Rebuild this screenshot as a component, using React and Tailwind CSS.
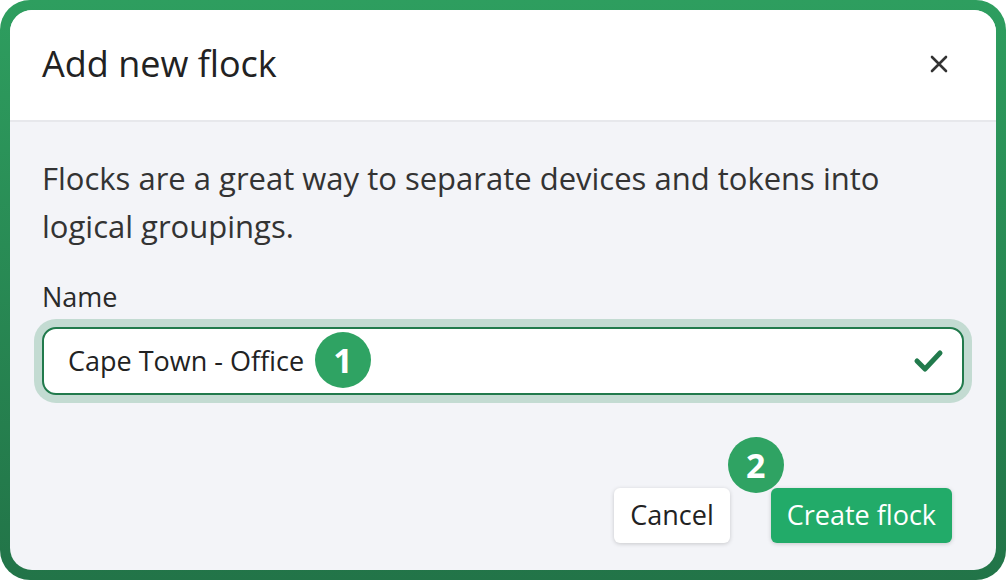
import React from "react";

function Badge({ n, className = "" }) {
  return (
    <div
      className={`absolute flex h-[56px] w-[56px] items-center justify-center rounded-full bg-[#2fa363] text-[34px] font-bold text-white ${className}`}
    >
      {n}
    </div>
  );
}

export default function App() {
  return (
    <div className="h-[580px] w-[1006px] bg-white" style={{ fontFamily: "'Open Sans', Lato, sans-serif" }}>
      <div className="h-full w-full rounded-[30px] bg-gradient-to-b from-[#2e9e5f] to-[#227448] p-[10px]">
        <div className="flex h-full flex-col overflow-hidden rounded-[22px] bg-[#f3f4f8]">
          {/* Header */}
          <div className="flex h-[112px] shrink-0 items-center justify-between border-b-2 border-[#e7e8ec] bg-white pb-[2px] pl-[32px] pr-[48px]">
            <h2 className="text-[36px] leading-none text-[#222]">Add new flock</h2>
            <svg width="18" height="18" viewBox="0 0 18 18" className="text-[#333]">
              <path d="M2 2L16 16M16 2L2 16" stroke="currentColor" strokeWidth="2.6" strokeLinecap="round" />
            </svg>
          </div>

          {/* Body */}
          <div className="flex flex-1 flex-col px-[32px] pt-[32px]">
            <p className="text-[31px] leading-[48px] text-[#333]">
              Flocks are a great way to separate devices and tokens into
              <br />
              logical groupings.
            </p>
            <label className="mt-[30px] text-[27px] leading-[34px] text-[#2a2a2a]">Name</label>
            <div className="relative mt-[13px] flex h-[68px] items-center rounded-[14px] border-2 border-[#217a4c] bg-white pl-[24px] pr-[18px] shadow-[0_0_0_8px_#c3dbd2]">
              <span className="text-[27px] text-[#222]">Cape Town - Office</span>
              <Badge n="1" className="left-[271px] top-[3px]" />
              <svg width="32" height="26" viewBox="0 0 32 26" className="ml-auto text-[#217a4c]">
                <path d="M5 13L13 21L28 5" fill="none" stroke="currentColor" strokeWidth="5" strokeLinecap="round" strokeLinejoin="round" />
              </svg>
            </div>

            <div className="mt-[93px] flex justify-end gap-[41px] pr-[12px]">
              <button className="h-[55px] rounded-[6px] bg-white px-[16px] text-[27px] text-[#222] shadow-[0_1px_4px_rgba(0,0,0,0.18)]">
                Cancel
              </button>
              <div className="relative">
                <button className="h-[55px] rounded-[6px] bg-[#22ab69] px-[16px] text-[27px] text-white shadow-[0_1px_4px_rgba(0,0,0,0.18)]">
                  Create flock
                </button>
                <Badge n="2" className="-left-[43px] -top-[51px]" />
              </div>
            </div>
          </div>
        </div>
      </div>
    </div>
  );
}
